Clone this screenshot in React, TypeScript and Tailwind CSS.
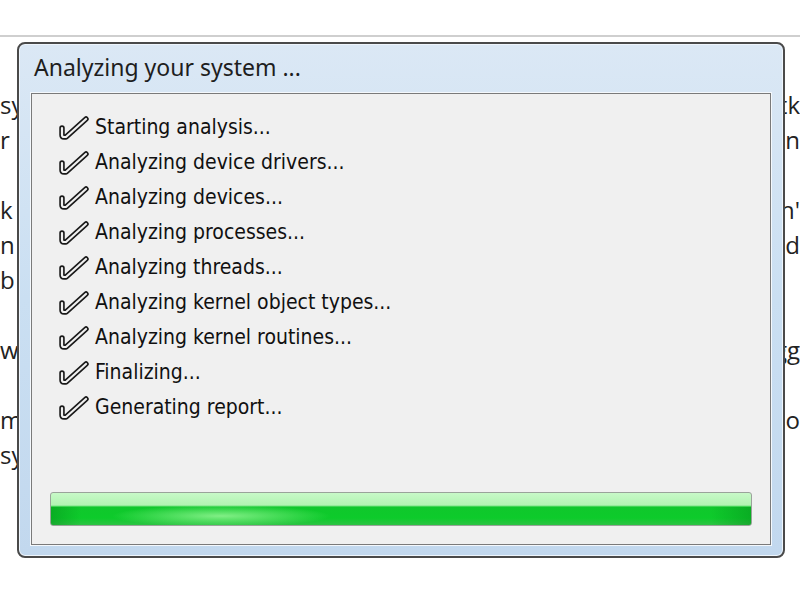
import React from 'react'

const steps = [
  'Starting analysis...',
  'Analyzing device drivers...',
  'Analyzing devices...',
  'Analyzing processes...',
  'Analyzing threads...',
  'Analyzing kernel object types...',
  'Analyzing kernel routines...',
  'Finalizing...',
  'Generating report...',
]

// fragments of the page text that peek out on both sides of the dialog
const bgLines: [string, string, boolean?][] = [
  ['sy', 'tk'],
  ['r H', 'an'],
  ['', ''],
  ['k', "h'"],
  ['n a', 'd'],
  ['b', ''],
  ['', ''],
  ['wi', 'gg', true],
  ['', ''],
  ['mp', 'o'],
  ['sy', ''],
]

const Check = () => (
  <svg width="31" height="24" viewBox="0 0 31 24" className="shrink-0">
    <path d="M4 12 L4 19 Q4 21 6 21 L8 21 L28 3" fill="none" stroke="#1a1a1a" strokeWidth="5.5" strokeLinejoin="round" strokeLinecap="round" />
    <path d="M4 12 L4 19 Q4 21 6 21 L8 21 L28 3" fill="none" stroke="#f0f0f0" strokeWidth="2.2" strokeLinejoin="round" strokeLinecap="round" />
  </svg>
)

export default function App() {
  return (
    <div className="relative w-[800px] h-[600px] bg-white overflow-hidden" style={{ fontFamily: '"Liberation Sans", Arial, sans-serif' }}>
      <div className="pt-[35px]">
        <div className="h-[2px] bg-[#cfcfcf]" />
      </div>

      {/* page text behind the dialog */}
      <div className="flex flex-col pt-[56px] text-[24px] text-[#222] leading-none" style={{ fontFamily: '"Open Sans", sans-serif' }}>
        {bgLines.map(([l, r, u], i) => (
          <div key={i} className="h-[35px] flex justify-between">
            <span>{l}</span>
            <span className={u ? 'underline' : ''}>{r}</span>
          </div>
        ))}
      </div>

      {/* dialog */}
      <div className="absolute left-[17px] top-[42px] w-[768px] h-[516px] rounded-[8px] border-2 border-[#4a4a4a] bg-gradient-to-b from-[#dbe8f5] via-[#cadff2] to-[#c2d8ee] shadow-[inset_0_0_0_1px_#eef5fc] flex flex-col px-[12px] pb-[11px]">
        <div className="h-[49px] flex items-center pl-[3px] pb-[3px] text-[23px] text-[#1e1e1e]" style={{ fontFamily: '"Noto Sans", sans-serif' }}>
          Analyzing your system ...
        </div>
        <div className="flex-1 border border-[#7a7a7a] shadow-[0_0_0_1px_#f4f8fc] bg-[#f0f0f0] flex flex-col px-[18px] pb-[18px]">
          <div className="flex flex-col pt-[16px] pl-[8px]">
            {steps.map((s) => (
              <div key={s} className="h-[35px] flex items-center gap-[6px] text-[21px] text-[#111]" style={{ fontFamily: '"DejaVu Sans Condensed", "DejaVu Sans", sans-serif' }}>
                <Check />
                <span>{s}</span>
              </div>
            ))}
          </div>
          <div className="flex-1" />
          <div className="relative h-[34px] rounded-[3px] border border-[#9aa39a] overflow-hidden bg-[linear-gradient(to_bottom,#c8f9c8_0%,#b2f3b2_38%,#10c72c_44%,#0dcb2b_78%,#2cc343_100%)]">
            <div className="absolute left-[60px] top-[12px] w-[220px] h-[22px] rounded-full bg-[radial-gradient(ellipse_at_center,rgba(150,245,150,0.85),rgba(150,245,150,0)_70%)]" />
            <div className="absolute left-0 top-[14px] w-[30px] h-[20px] bg-[linear-gradient(to_right,rgba(0,120,20,0.35),rgba(0,120,20,0))]" />
            <div className="absolute right-0 top-[14px] w-[40px] h-[20px] bg-[linear-gradient(to_left,rgba(0,120,20,0.35),rgba(0,120,20,0))]" />
          </div>
        </div>
      </div>
    </div>
  )
}
